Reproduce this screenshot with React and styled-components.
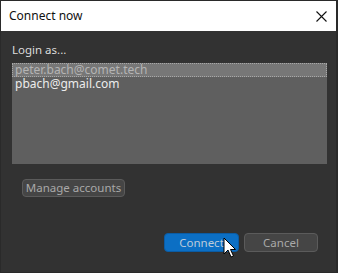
import React from 'react'
import styled, { createGlobalStyle } from 'styled-components'

const Global = createGlobalStyle`
  html, body {
    margin: 0;
    padding: 0;
    background: #2b2b2b;
  }
  body {
    font-family: "Noto Sans", "Open Sans", sans-serif;
  }
`

const Window = styled.div`
  position: relative;
  width: 338px;
  height: 273px;
  box-sizing: border-box;
  border: 1px solid #2a2a2a;
  border-right-width: 2px;
  background: #323232;
  display: flex;
  flex-direction: column;
`

const TitleBar = styled.div`
  height: 30px;
  background: #ffffff;
  display: flex;
  align-items: center;
  justify-content: space-between;
  padding: 0 9px 0 8px;
`

const Title = styled.span`
  font-size: 12px;
  color: #111;
  padding-bottom: 2px;
`

const Close = styled.svg`
  width: 11px;
  height: 11px;
`

const Body = styled.div`
  flex: 1;
  display: flex;
  flex-direction: column;
  padding: 13px 9px 0 11px;
`

const Label = styled.div`
  font-size: 11.5px;
  color: #dcdcdc;
  height: 19px;
  line-height: 12px;
`

const List = styled.ul`
  margin: 0;
  padding: 0;
  list-style: none;
  height: 101px;
  background: #5f5f5f;
`

const Item = styled.li`
  height: 14px;
  line-height: 14px;
  padding-left: 3px;
  font-size: 12px;
  color: ${p => (p.selected ? '#b4b4b4' : '#ececec')};
  background: ${p => (p.selected ? '#777777' : 'transparent')};
  outline: ${p => (p.selected ? '1px dotted #a8a8a8' : 'none')};
  outline-offset: -1px;
`

const Button = styled.button`
  box-sizing: border-box;
  height: ${p => p.h || 19}px;
  width: ${p => p.w}px;
  padding: 0 0 1px;
  border-radius: 4px;
  font-family: inherit;
  font-size: 11.5px;
  border: 1px solid ${p => (p.primary ? '#0b5ca4' : '#5b5b5b')};
  background: ${p => (p.primary ? '#0c6fc4' : '#454545')};
  color: ${p => (p.primary ? '#bccbda' : '#a9a9a9')};
`

const ManageRow = styled.div`
  display: flex;
  margin-top: 15px;
  padding-left: 10px;
`

const Footer = styled.div`
  margin-top: 36px;
  display: flex;
  justify-content: flex-end;
  gap: 5px;
  padding-right: 9px;
`

const Cursor = styled.svg`
  position: absolute;
  left: 222px;
  top: 236px;
  width: 14px;
  height: 22px;
`

export default function App() {
  return (
    <>
      <Global />
      <Window>
        <TitleBar>
          <Title>Connect now</Title>
          <Close viewBox="0 0 11 11">
            <path d="M0.5 0.5 L10.5 10.5 M10.5 0.5 L0.5 10.5" stroke="#111" strokeWidth="1.1" />
          </Close>
        </TitleBar>
        <Body>
          <Label>Login as...</Label>
          <List>
            <Item selected>peter.bach@comet.tech</Item>
            <Item>pbach@gmail.com</Item>
          </List>
          <ManageRow>
            <Button w={103} h={18}>Manage accounts</Button>
          </ManageRow>
          <Footer>
            <Button primary w={75}>Connect</Button>
            <Button w={74}>Cancel</Button>
          </Footer>
        </Body>
        <Cursor viewBox="0 0 14 22">
          <path
            d="M1 1 L1 17 L5 13 L8 20 L10.5 19 L7.5 12.5 L12.5 12.5 Z"
            fill="#fff"
            stroke="#000"
            strokeWidth="1"
            strokeLinejoin="miter"
          />
        </Cursor>
      </Window>
    </>
  )
}
